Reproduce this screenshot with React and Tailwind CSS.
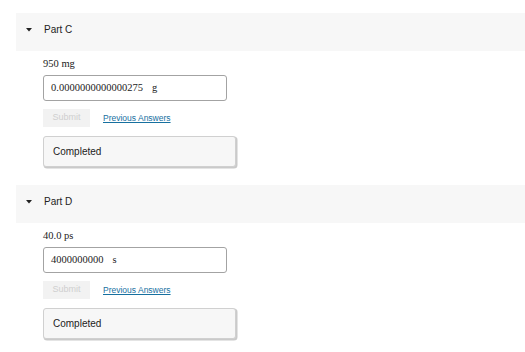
const parts = [
  { name: "Part C", prompt: "950 mg", value: "0.0000000000000275", unit: "g" },
  { name: "Part D", prompt: "40.0 ps", value: "4000000000", unit: "s" },
];

function Caret() {
  return (
    <svg width="6" height="4" viewBox="0 0 6 4" className="block">
      <path d="M0 0 H6 L3 3.5 Z" fill="#222" />
    </svg>
  );
}

function PartBlock({ part }) {
  return (
    <section className="mb-[18px]">
      <div className="flex h-[38px] items-start bg-[#f7f7f7] pl-[10px] pt-[11px]">
        <span className="mt-[4px]"><Caret /></span>
        <span className="ml-[12px] text-[10px] leading-[12px] text-[#222]">{part.name}</span>
      </div>
      <div className="pl-[27px]">
        <p className="mt-[7px] font-['Liberation_Serif',serif] text-[10.5px] leading-[12px] text-[#222]">{part.prompt}</p>
        <div className="mt-[5px] flex h-[26px] w-[184px] items-center rounded-[3px] border border-[#a3a3a3] bg-white pl-[7px] font-['Liberation_Serif',serif] text-[10.5px] text-[#222]">
          <span>{part.value}</span>
          <span className="ml-[9px]">{part.unit}</span>
        </div>
        <div className="mt-[8px] flex items-center">
          <button className="h-[18px] w-[47px] bg-[#f2f2f2] text-[9px] text-[#cfcfcf]">Submit</button>
          <a href="#" className="ml-[13px] text-[8.5px] text-[#17709f] underline">Previous Answers</a>
        </div>
        <div className="mt-[9px] flex h-[31px] w-[193px] items-center rounded-[3px] border border-[#d0d0d0] bg-[#f7f7f7] pl-[9px] text-[10px] text-[#222] shadow-[1px_1px_0_0.5px_#cacaca]">
          Completed
        </div>
      </div>
    </section>
  );
}

export default function App() {
  return (
    <div className="h-[352px] w-[525px] overflow-hidden bg-white pl-4 pt-[13px] font-['Liberation_Sans',Arial,sans-serif]">
      {parts.map((p) => (
        <PartBlock key={p.name} part={p} />
      ))}
    </div>
  );
}
